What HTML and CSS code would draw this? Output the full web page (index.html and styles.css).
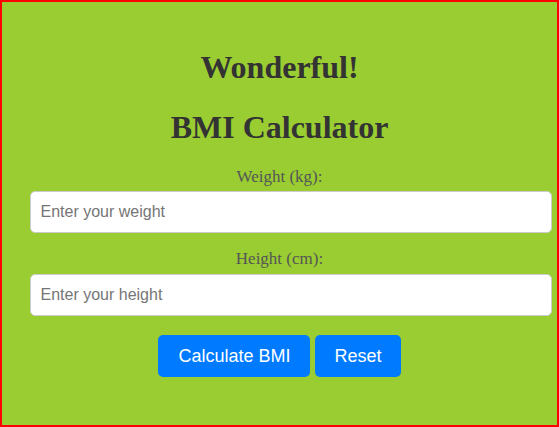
FILE: index.html
```html
<!DOCTYPE html>
<html>
<head>
<meta charset="utf-8">
<link rel="stylesheet" href="styles.css">
</head>
<body>
<div class="container">
  <h1 class="title">Wonderful!</h1>
  <h1 class="title second">BMI Calculator</h1>
  <label class="label" for="weight">Weight (kg):</label>
  <input class="field" id="weight" type="text" placeholder="Enter your weight">
  <label class="label label-next" for="height">Height (cm):</label>
  <input class="field field-next" id="height" type="text" placeholder="Enter your height">
  <div class="actions">
    <button class="btn">Calculate BMI</button>
    <button class="btn">Reset</button>
  </div>
</div>
</body>
</html>
```
FILE: styles.css
```css
html, body {
  margin: 0;
  padding: 0;
}
body {
  width: 559px;
  height: 427px;
  box-sizing: border-box;
  border: 2px solid #ff0000;
  background: #9acd32;
  font-family: "Liberation Serif", "Times New Roman", serif;
  overflow: hidden;
}
.container {
  width: 500px;
  margin: 0 auto;
  padding-top: 47px;
  text-align: center;
}
.title {
  margin: 0;
  font-size: 32px;
  line-height: 36px;
  font-weight: bold;
  color: #333333;
}
.second {
  margin-top: 24px;
}
.label {
  display: block;
  margin-top: 22px;
  font-size: 17px;
  line-height: 19px;
  color: #555555;
}
.label-next {
  margin-top: 16px;
}
.field {
  display: block;
  width: 500px;
  height: 20px;
  margin-top: 5px;
  padding: 10px;
  border: 1px solid #cccccc;
  border-radius: 5px;
  font-family: "Liberation Sans", Arial, sans-serif;
  font-size: 16px;
  line-height: 20px;
  box-sizing: content-box;
  background: #ffffff;
  color: #333333;
  outline: none;
}
.field-next {
  margin-top: 6px;
}
.field::placeholder {
  color: #757575;
}
.actions {
  display: flex;
  justify-content: center;
  gap: 5px;
  margin-top: 19px;
}
.btn {
  padding: 10px 19px 10px 20px;
  border: none;
  border-radius: 5px;
  background: #007bff;
  color: #ffffff;
  font-family: "Liberation Sans", Arial, sans-serif;
  font-size: 18px;
  line-height: 22px;
  cursor: pointer;
}
```
